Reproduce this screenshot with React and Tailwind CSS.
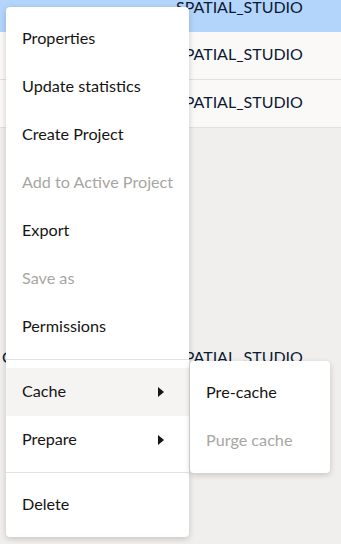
import React from "react";

const font = { fontFamily: "Lato, 'Noto Sans', sans-serif" };

function Row({ bg, text, border, first }) {
  return (
    <div
      className={`h-[48px] flex items-center ${bg} ${border ? "border-b border-[#e3e1df]" : ""}`}
    >
      {first && <span className="pl-[2px] text-[16px] text-[#0b1a33] pb-[3px]">{first}</span>}
      <span className="absolute left-[176px] text-[16px] text-[#0b1a33] whitespace-nowrap pb-[3px]">{text}</span>
    </div>
  );
}

function Item({ label, disabled, active, arrow }) {
  return (
    <div
      className={`h-[48px] flex items-center justify-between pl-[16px] pr-[25px] text-[16.2px] whitespace-nowrap pb-[1px] ${
        disabled ? "text-[#a8a6a3]" : "text-[#161513]"
      } ${active ? "bg-[#f5f4f2]" : ""}`}
    >
      <span>{label}</span>
      {arrow && (
        <svg width="6" height="10" viewBox="0 0 6 10">
          <path d="M0 0 L6 5 L0 10 Z" fill="#161513" />
        </svg>
      )}
    </div>
  );
}

export default function App() {
  return (
    <div className="relative w-[341px] h-[544px] overflow-hidden bg-[#f1efed]" style={font}>
      <div className="mt-[-16px]">
        <div className="relative"><Row bg="bg-[#b3d4fb]" text="SPATIAL_STUDIO" /></div>
        <div className="relative"><Row bg="bg-[#fbf9f8]" text="SPATIAL_STUDIO" border /></div>
        <div className="relative"><Row bg="bg-[#fbf9f8]" text="SPATIAL_STUDIO" border /></div>
        <div className="relative mt-[206px]"><Row bg="" text="SPATIAL_STUDIO" first="C" /></div>
      </div>

      <div className="absolute left-[6px] top-[7px] w-[183px] bg-white rounded-[4px] shadow-[0_2px_6px_rgba(0,0,0,0.18)]">
        <div className="py-[8px]">
          <Item label="Properties" />
          <Item label="Update statistics" />
          <Item label="Create Project" />
          <Item label="Add to Active Project" disabled />
          <Item label="Export" />
          <Item label="Save as" disabled />
          <Item label="Permissions" />
        </div>
        <div className="h-px bg-[#e4e2e0]" />
        <div className="py-[8px]">
          <Item label="Cache" active arrow />
          <Item label="Prepare" arrow />
        </div>
        <div className="h-px bg-[#e4e2e0]" />
        <div className="py-[8px]">
          <Item label="Delete" />
        </div>
      </div>

      <div className="absolute left-[190px] top-[361px] w-[140px] bg-white rounded-[4px] shadow-[0_2px_6px_rgba(0,0,0,0.18)] py-[8px]">
        <Item label="Pre-cache" />
        <Item label="Purge cache" disabled />
      </div>
    </div>
  );
}
